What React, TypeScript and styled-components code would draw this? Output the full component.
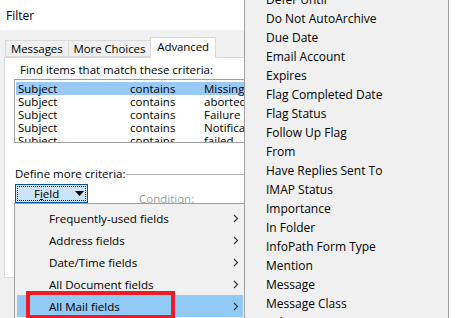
import React from "react";
import styled, { createGlobalStyle } from "styled-components";

const Global = createGlobalStyle`
  html, body { margin: 0; padding: 0; background: #ffffff; }
  body { font-family: "Open Sans", "Noto Sans", sans-serif; font-size: 11.5px; color: #000; }
  * { box-sizing: border-box; }
`;

const Root = styled.div`
  position: relative;
  width: 456px;
  height: 318px;
  overflow: hidden;
  background: #ffffff;
`;

const Dialog = styled.div`
  width: 449px;
  height: 318px;
  background: #f0f0f0;
  display: flex;
  flex-direction: column;
`;

const TitleBar = styled.div`
  height: 30px;
  background: #ffffff;
  display: flex;
  align-items: center;
  padding-left: 6px;
  font-size: 12px;
`;

const Body = styled.div`
  padding: 7px 0 0 4px;
  display: flex;
  flex-direction: column;
`;

const TabRow = styled.div`
  display: flex;
  align-items: flex-end;
  height: 20px;
  padding-left: 2px;
  position: relative;
  z-index: 1;
`;

const Tab = styled.div<{ $active?: boolean }>`
  height: ${(p) => (p.$active ? "21px" : "17px")};
  margin-bottom: ${(p) => (p.$active ? "-1px" : "0")};
  padding: 0 ${(p) => (p.$active ? "6px" : "5px")};
  display: flex;
  align-items: center;
  background: ${(p) => (p.$active ? "#ffffff" : "#f0f0f0")};
  border: 1px solid #d9d9d9;
  border-bottom: ${(p) => (p.$active ? "none" : "1px solid #d9d9d9")};
  margin-left: -1px;
  padding-bottom: ${(p) => (p.$active ? "3px" : "0")};
  letter-spacing: -0.1px;
`;

const Panel = styled.div`
  width: 262px;
  height: 221px;
  background: #ffffff;
  border: 1px solid #d9d9d9;
  padding: 4px 0 0 9px;
  display: flex;
  flex-direction: column;
`;

const Caption = styled.div`
  line-height: 15px;
  padding-left: 6px;
`;

const ListBox = styled.div`
  margin-top: 2px;
  height: 64px;
  border: 1px solid #a0a0a0;
  border-right: none;
  padding: 2px 0 0 1px;
  overflow: hidden;
`;

const Row = styled.div<{ $selected?: boolean }>`
  height: 13px;
  line-height: 13px;
  display: grid;
  grid-template-columns: 112px 74px 1fr;
  padding-left: 2px;
  background: ${(p) => (p.$selected ? "#99c9f7" : "transparent")};
  white-space: nowrap;
`;

const SectionHead = styled.div`
  margin-top: 23px;
  display: flex;
  align-items: center;
  gap: 1px;
  line-height: 15px;
  padding-left: 1px;
  &::after {
    content: "";
    flex: 1;
    height: 1px;
    background: #b4b4b4;
    margin-top: 2px;
  }
`;

const FieldRow = styled.div`
  margin-top: 3px;
  display: flex;
  align-items: flex-end;
`;

const FieldButton = styled.div`
  width: 73px;
  height: 19px;
  margin-left: 1px;
  background: #cce4f7;
  border: 1px solid #005499;
  padding: 1px;
  display: flex;
`;

const FocusRect = styled.div`
  flex: 1;
  border: 1px dotted #000;
  display: flex;
  align-items: center;
  padding-left: 16px;
  gap: 16px;
  line-height: 13px;
`;

const Underlined = styled.span`
  text-decoration: underline;
`;

const Condition = styled.div`
  margin-left: 51px;
  color: #a0a0a0;
  line-height: 13px;
  margin-bottom: -2px;
`;

const Menu = styled.div`
  position: absolute;
  left: 14px;
  top: 203px;
  width: 232px;
  height: 130px;
  background: #f0f0f0;
  border: 1px solid #a0a0a0;
  padding: 3px 2px 0 2px;
  display: flex;
  flex-direction: column;
`;

const MenuItem = styled.div<{ $hot?: boolean }>`
  height: 22px;
  display: flex;
  align-items: center;
  justify-content: space-between;
  padding: 0 4px 0 32px;
  background: ${(p) => (p.$hot ? "#91c9f7" : "transparent")};
  font-size: 11.6px;
`;

const SubMenu = styled.div`
  position: absolute;
  left: 244px;
  top: -13px;
  width: 205px;
  height: 345px;
  background: #f0f0f0;
  border: 1px solid #a0a0a0;
  padding: 2px 0 0 21px;
  display: flex;
  flex-direction: column;
`;

const SubItem = styled.div`
  height: 19px;
  line-height: 19px;
  font-size: 12px;
  white-space: nowrap;
`;

const Highlight = styled.div`
  position: absolute;
  left: 26px;
  top: 291px;
  width: 149px;
  height: 28px;
  border: 4px solid #ed1c24;
`;

const Chevron = () => (
  <svg width="6" height="9" viewBox="0 0 6 9">
    <path d="M1 1 L4.5 4.5 L1 8" fill="none" stroke="#333" strokeWidth="1.1" />
  </svg>
);

const Triangle = () => (
  <svg width="9" height="5" viewBox="0 0 9 5">
    <path d="M0 0 H9 L4.5 5 Z" fill="#000" />
  </svg>
);

const rows = [
  ["Subject", "contains", "Missing"],
  ["Subject", "contains", "aborted"],
  ["Subject", "contains", "Failure"],
  ["Subject", "contains", "Notifica"],
  ["Subject", "contains", "failed"],
];

const menuItems = [
  "Frequently-used fields",
  "Address fields",
  "Date/Time fields",
  "All Document fields",
  "All Mail fields",
];

const subItems = [
  "Defer Until",
  "Do Not AutoArchive",
  "Due Date",
  "Email Account",
  "Expires",
  "Flag Completed Date",
  "Flag Status",
  "Follow Up Flag",
  "From",
  "Have Replies Sent To",
  "IMAP Status",
  "Importance",
  "In Folder",
  "InfoPath Form Type",
  "Mention",
  "Message",
  "Message Class",
  "Mileage",
];

export default function App() {
  return (
    <Root>
      <Global />
      <Dialog>
        <TitleBar>Filter</TitleBar>
        <Body>
          <TabRow>
            <Tab>Messages</Tab>
            <Tab>More Choices</Tab>
            <Tab $active>Advanced</Tab>
          </TabRow>
          <Panel>
            <Caption>Find items that match these criteria:</Caption>
            <ListBox>
              {rows.map((r, i) => (
                <Row key={i} $selected={i === 0}>
                  <span>{r[0]}</span>
                  <span>{r[1]}</span>
                  <span>{r[2]}</span>
                </Row>
              ))}
            </ListBox>
            <SectionHead>Define more criteria:</SectionHead>
            <FieldRow>
              <FieldButton>
                <FocusRect>
                  <span>
                    F<Underlined>i</Underlined>eld
                  </span>
                  <Triangle />
                </FocusRect>
              </FieldButton>
              <Condition>Condition:</Condition>
            </FieldRow>
          </Panel>
        </Body>
      </Dialog>
      <Menu>
        {menuItems.map((m, i) => (
          <MenuItem key={m} $hot={i === 4}>
            <span>{m}</span>
            <Chevron />
          </MenuItem>
        ))}
      </Menu>
      <Highlight />
      <SubMenu>
        {subItems.map((s) => (
          <SubItem key={s}>{s}</SubItem>
        ))}
      </SubMenu>
    </Root>
  );
}
